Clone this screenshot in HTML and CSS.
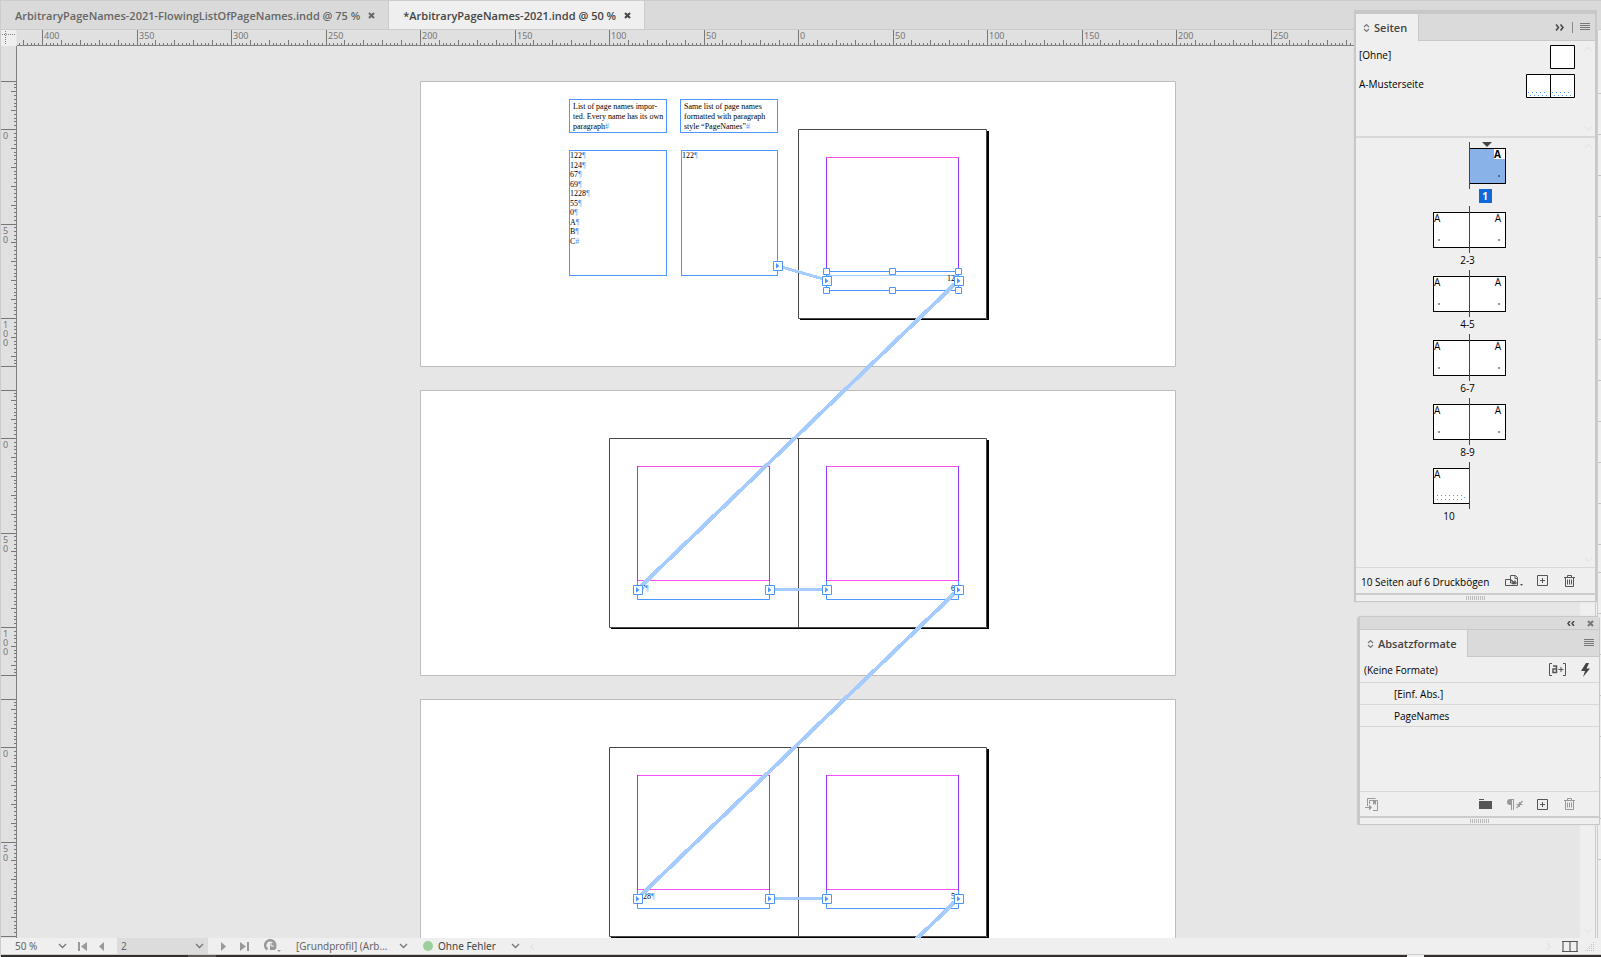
FILE: index.html
```html
<!DOCTYPE html>
<html lang="de">
<head>
<meta charset="utf-8">
<title>ArbitraryPageNames-2021.indd</title>
<link rel="stylesheet" href="styles.css">
</head>
<body>
<svg class="defs" aria-hidden="true">
  <symbol id="chevron" viewBox="0 0 9 6"><path d="M1 1l3.5 3.5L8 1" fill="none" stroke="currentColor" stroke-width="1.3"/></symbol>
  <symbol id="close" viewBox="0 0 7 7"><path d="M1 1l5 5M6 1l-5 5" stroke="currentColor" stroke-width="2"/></symbol>
  <symbol id="updown" viewBox="0 0 7 10"><path d="M1 4l2.500-2.500L6 4M1 6l2.500 2.500L6 6" fill="none" stroke="currentColor" stroke-width="1.2"/></symbol>
  <symbol id="menu" viewBox="0 0 10 8"><path d="M0 .5h10M0 2.500h10M0 4.500h10M0 6.500h10" stroke="currentColor"/></symbol>
  <symbol id="plus" viewBox="0 0 11 11"><path d="M.5.5h10v10H.5zM5.500 3v5M3 5.500h5" fill="none" stroke="currentColor"/></symbol>
  <symbol id="trash" viewBox="0 0 11 12"><path d="M0 2.500h11M3.500 2V.5h4V2M1.500 3v8.500h8V3M3.500 4.500v5M5.500 4.500v5M7.500 4.500v5" fill="none" stroke="currentColor"/></symbol>
  <symbol id="grip" viewBox="0 0 20 4"><path d="M.5 0v4M2.500 0v4M4.500 0v4M6.500 0v4M8.500 0v4M10.500 0v4M12.500 0v4M14.500 0v4M16.500 0v4M18.500 0v4" stroke="#bbb"/></symbol>
  <symbol id="port" viewBox="0 0 10 10"><path d="M.5.5h9v9h-9z" fill="#fff" stroke="#4c97ff"/><path d="M3 2v5.500L6.500 5z" fill="#4c97ff"/></symbol>
</svg>

<div class="app">
  <nav class="tabs">
    <div class="tab"><span>ArbitraryPageNames-2021-FlowingListOfPageNames.indd @ 75 %</span><button type="button" aria-label="Schließen"><svg width="7" height="7"><use href="#close"/></svg></button></div>
    <div class="tab active"><span>*ArbitraryPageNames-2021.indd @ 50 %</span><button type="button" aria-label="Schließen"><svg width="7" height="7"><use href="#close"/></svg></button></div>
  </nav>

  <div class="workspace">
    <svg class="corner" width="15" height="16"><path d="M1 4.500h14M4.500 1v14" stroke="#808080" stroke-dasharray="1 1"/></svg>
    <svg class="ruler-h" id="ruler-h"></svg>
    <svg class="ruler-v" id="ruler-v"></svg>
    <main class="canvas">
      <svg class="art">
        <g transform="translate(-17 -46)">
          <g id="boards" fill="#fff" stroke="#bdbdbd">
            <path d="M420.500 81.500h755v285h-755zM420.500 390.500h755v285h-755zM420.500 699.500h755v285h-755z"/>
          </g>
          <g>
            <path d="M987 131h2v189H800v-1h187z"/>
            <path d="M798.500 129.500h188v189h-188z" fill="#fff" stroke="#484848"/>
            <path d="M826.500 157v114M958.500 157v114" stroke="#9537ff"/>
            <path d="M826 157.500h133" stroke="#f74ff5"/>
            <path d="M826.500 271.500h132v19h-132z" fill="none" stroke="#4c97ff"/>
            <path d="M827 275.500h131" stroke="#a6cbff"/>
            <text x="947" y="281">12</text>
          </g>
          <g id="spread">
            <path d="M987 440h2v189H611v-1h376z"/>
            <path d="M609.500 438.500h377v189h-377zM798.500 438v189" fill="#fff" stroke="#484848"/>
            <path d="M637.500 580v19.500h132V580M826.500 580v19.500h132V580" fill="none" stroke="#4c97ff"/>
            <path d="M637.500 466v115M769.500 466v115M826.500 466v115M958.500 466v115" stroke="#9537ff"/>
            <path d="M638 466.500h131M638 580.500h131M827 466.500h131M827 580.500h131" stroke="#f74ff5"/>
          </g>
          <use href="#spread" y="309"/>
          <text x="641" y="591">7<tspan class="mark">¶</tspan></text>
          <text x="951" y="591">6</text>
          <text x="643" y="899">28<tspan class="mark">¶</tspan></text>
          <text x="951" y="899">5</text>
          <g stroke="#a6cbff" fill="none" shape-rendering="crispEdges">
            <path d="M778 266l49 14M770 589.500h57M770 898.500h57" stroke-width="3"/>
            <path d="M958 281L638 589M958 590L638 898M958 899L638 1207" stroke-width="4"/>
          </g>
          <g fill="#fff" stroke="#4c97ff">
            <path d="M823.500 268.500h6v6h-6zM889.500 268.500h6v6h-6zM955.500 268.500h6v6h-6zM823.500 287.500h6v6h-6zM889.500 287.500h6v6h-6zM955.500 287.500h6v6h-6z"/>
          </g>
          <g id="ports">
            <use href="#port" x="822" y="276" width="10" height="10"/>
            <use href="#port" x="954" y="276" width="10" height="10"/>
            <g id="spread-ports">
              <use href="#port" x="633" y="585" width="10" height="10"/>
              <use href="#port" x="765" y="585" width="10" height="10"/>
              <use href="#port" x="822" y="585" width="10" height="10"/>
              <use href="#port" x="954" y="585" width="10" height="10"/>
            </g>
            <use href="#spread-ports" y="309"/>
          </g>
        </g>
      </svg>
      <div class="frame note note-a">List of page names impor-<br>ted. Every name has its own<br>paragraph<i>#</i></div>
      <div class="frame note note-b">Same list of page names<br>formatted with paragraph<br>style “PageNames”<i>#</i></div>
      <div class="frame list list-a">
        <p>122<i>¶</i></p><p>124<i>¶</i></p><p>67<i>¶</i></p><p>69<i>¶</i></p><p>1228<i>¶</i></p><p>55<i>¶</i></p><p>0<i>¶</i></p><p>A<i>¶</i></p><p>B<i>¶</i></p><p>C<i>#</i></p>
      </div>
      <div class="frame list list-b"><p>122<i>¶</i></p></div>
      <svg class="port-over" width="10" height="10"><use href="#port"/></svg>
    </main>
    <div class="scrollbar"><svg width="9" height="6"><use href="#chevron"/></svg></div>
    <div class="dock"><i></i><i></i><i></i><i></i><i></i><i></i><i></i><i></i><i></i><i></i><i></i><i></i><i class="wide"></i><i></i><i></i><i></i><i></i><i></i><i></i><i></i></div>
  </div>

  <footer class="status">
    <label class="pick zoom"><select aria-label="Zoom"><option>50 %</option></select><svg width="9" height="6"><use href="#chevron"/></svg></label>
    <button type="button" class="first" aria-label="Erste Seite"><svg width="9" height="9"><path d="M0 0h2v9H0zM9 0v9L3 4.500z" fill="#999"/></svg></button>
    <button type="button" class="prev" aria-label="Vorherige Seite"><svg width="5" height="9"><path d="M5 0v9L0 4.500z" fill="#999"/></svg></button>
    <label class="pick page"><select aria-label="Seite"><option>2</option></select><svg width="9" height="6"><use href="#chevron"/></svg></label>
    <button type="button" class="next" aria-label="Nächste Seite"><svg width="5" height="9"><path d="M0 0v9l5-4.500z" fill="#999"/></svg></button>
    <button type="button" class="last" aria-label="Letzte Seite"><svg width="9" height="9"><path d="M7 0h2v9H7zM0 0v9l6-4.500z" fill="#999"/></svg></button>
    <button type="button" class="pre" aria-label="Preflight"><svg width="17" height="14"><path d="M3.500 10.500A5 5 0 1 1 11 7.500V10" fill="none" stroke="#999" stroke-width="2.600"/><path d="M6 4h3l2 2v5H6z" fill="#999"/><path d="M7 3v4h3" fill="none" stroke="#efefef"/><path d="M13 11h4l-2 2z" fill="#999"/></svg></button>
    <label class="pick profile"><select aria-label="Profil"><option>[Grundprofil] (Arb...</option></select><svg width="9" height="6"><use href="#chevron"/></svg></label>
    <span class="dot"></span>
    <label class="pick errors"><select aria-label="Fehler"><option>Ohne Fehler</option></select><svg width="9" height="6"><use href="#chevron"/></svg></label>
    <svg class="faint" width="5" height="9"><path d="M4 1L1 4.500 4 8" fill="none" stroke="#ddd"/></svg>
    <svg class="faint end" width="5" height="9"><path d="M1 1l3 3.500L1 8" fill="none" stroke="#ddd"/></svg>
    <button type="button" class="split" aria-label="Layoutansicht teilen"><svg width="16" height="11"><path d="M1 0v11M8 0v11M15 0v11" stroke="#999" stroke-width="2"/><path d="M0 .5h16M0 10.500h16" stroke="#555"/></svg></button>
    <svg class="resize" width="10" height="10"><path d="M0 9.500h10M2 7.500h8M4 5.500h6M6 3.500h4M8 1.500h2" stroke="#c4c4c4" stroke-dasharray="1 1"/></svg>
  </footer>
  <div class="taskbar"><i class="seg-a"></i><i class="seg-b"></i></div>
</div>

<section class="panel pages" aria-label="Seiten">
  <header class="bar">
    <h2><svg width="7" height="10"><use href="#updown"/></svg>Seiten</h2>
    <button type="button" aria-label="Einklappen"><svg width="9" height="7"><path d="M1 .5l2.500 3L1 6.500M5.500.5l2.500 3-2.500 3" fill="none" stroke="#444" stroke-width="1.500"/></svg></button>
    <span class="sep"></span>
    <button type="button" aria-label="Menü"><svg width="10" height="8"><use href="#menu"/></svg></button>
  </header>
  <div class="masters">
    <div class="master"><span>[Ohne]</span><svg width="25" height="24"><path d="M.5.5h24v23H.5z" fill="#fff" stroke="#000"/></svg></div>
    <div class="master"><span>A-Musterseite</span><svg width="49" height="24"><path d="M.5.5h48v23H.5zM24.500 0v24" fill="#fff" stroke="#000"/><path d="M2 18.500h20M4 21.500h18M26 18.500h20M28 21.500h18" stroke="#4c97ff" stroke-dasharray="1 3"/></svg></div>
    <svg class="scroll-up" width="9" height="6"><use href="#chevron"/></svg>
    <svg class="scroll-down" width="9" height="6"><use href="#chevron"/></svg>
  </div>
  <div class="thumbs">
    <svg class="scroll-up" width="9" height="6"><use href="#chevron"/></svg>
    <svg class="scroll-down" width="9" height="6"><use href="#chevron"/></svg>
    <figure class="right-only"><div class="sheets"><svg class="pointer" width="10" height="5"><path d="M0 0h10L5 5z" fill="#444"/></svg><span class="sheet current"><b>A</b><u></u></span></div><figcaption><mark>1</mark></figcaption></figure>
    <figure><div class="sheets"><span class="sheet">A<u></u></span><span class="sheet">A<u></u></span></div><figcaption>2-3</figcaption></figure>
    <figure><div class="sheets"><span class="sheet">A<u></u></span><span class="sheet">A<u></u></span></div><figcaption>4-5</figcaption></figure>
    <figure><div class="sheets"><span class="sheet">A<u></u></span><span class="sheet">A<u></u></span></div><figcaption>6-7</figcaption></figure>
    <figure><div class="sheets"><span class="sheet">A<u></u></span><span class="sheet">A<u></u></span></div><figcaption>8-9</figcaption></figure>
    <figure class="left-only"><div class="sheets"><span class="sheet">A<svg width="30" height="6"><path d="M0 .5h28M0 4.500h26M27 2.500h1" stroke="#4c97ff" stroke-dasharray="1 3"/></svg></span></div><figcaption>10</figcaption></figure>
  </div>
  <footer class="tools">
    <span>10 Seiten auf 6 Druckbögen</span>
    <button type="button" class="size" aria-label="Seitenformat bearbeiten"><svg width="18" height="12"><path d="M5.500 4.500h-5v6h12V7M5.500 8V.5h5l2 2V8zM10 1v2.500h2.500" fill="none" stroke="#555"/><path d="M6 5l4 3.500M10 5.500v3H7" stroke="#555" stroke-width="1.500" fill="none"/><path d="M15 9h3l-1.500 2z" fill="#555"/></svg></button>
    <button type="button" aria-label="Neue Seite"><svg width="11" height="11"><use href="#plus"/></svg></button>
    <button type="button" aria-label="Seite löschen"><svg width="11" height="12"><use href="#trash"/></svg></button>
  </footer>
  <div class="grip"><svg width="20" height="4"><use href="#grip"/></svg></div>
</section>

<section class="panel styles" aria-label="Absatzformate">
  <div class="titlebar">
    <button type="button" aria-label="Einklappen"><svg width="8" height="5"><path d="M3 0L1 2.500 3 5M7 0L5 2.500 7 5" fill="none" stroke="#444" stroke-width="1.500"/></svg></button>
    <button type="button" aria-label="Schließen"><svg width="7" height="7"><use href="#close"/></svg></button>
  </div>
  <header class="bar">
    <h2><svg width="7" height="10"><use href="#updown"/></svg>Absatzformate</h2>
    <button type="button" aria-label="Menü"><svg width="10" height="8"><use href="#menu"/></svg></button>
  </header>
  <div class="current-style"><span>(Keine Formate)</span>
    <button type="button" class="override" aria-label="Abweichungen hervorheben"><svg width="17" height="13" fill="none" stroke="#555"><path d="M3 .5H.5v12H3M14 .5h2.500v12H14"/><path d="M4 3h3.500v7M8 6H4v3.500H8" stroke-width="1.500"/><path d="M9.500 6.500h5M12 4v5"/></svg></button>
    <button type="button" aria-label="Schnell anwenden"><svg width="9" height="14"><path d="M5 0L0 8h4l-2 6 7-8.500H5.500L8 0z" fill="#444"/></svg></button>
  </div>
  <ul>
    <li>[Einf. Abs.]</li>
    <li>PageNames</li>
  </ul>
  <footer class="tools">
    <button type="button" class="load" aria-label="In Bibliothek"><svg width="13" height="13" fill="none" stroke="#999"><path d="M2.500 8V.5h8M4.500 6V2.500h8v10H8M0 9.500h5"/><path d="M4 6.500v6L7 9.500zM8 3h3v4L9.500 5.500 8 7z" fill="#999" stroke="none"/></svg></button>
    <button type="button" aria-label="Ordner"><svg width="13" height="11"><path d="M0 .5h5" stroke="#555"/><path d="M0 2h13v8H0z" fill="#555"/></svg></button>
    <button type="button" aria-label="Abweichungen löschen"><svg width="17" height="11"><path d="M4 0h4v11H7V1H6v10H5V6H4a3 3 0 0 1 0-6z" fill="#999"/><path d="M16.500 2l-6 7M10.500 5.500h6M13.500 3v5" stroke="#999" stroke-width="1.200"/></svg></button>
    <button type="button" aria-label="Neues Format"><svg width="11" height="11"><use href="#plus"/></svg></button>
    <button type="button" class="off" aria-label="Format löschen"><svg width="11" height="12"><use href="#trash"/></svg></button>
  </footer>
  <div class="grip"><svg width="20" height="4"><use href="#grip"/></svg></div>
</section>
<script src="rulers.js"></script>
</body>
</html>
```
FILE: styles.css
```css
* { box-sizing: border-box; }
body {
  margin: 0;
  height: 100vh;
  overflow: hidden;
  position: relative;
  background: #e6e6e6;
  color: #000;
  font: 10px/14px "Open Sans", "Noto Sans", sans-serif;
}
p, h2, ul, figure { margin: 0; padding: 0; }
button {
  display: flex;
  padding: 0;
  border: 0;
  background: none;
  color: #555;
}
svg { display: block; flex: none; }
.defs { position: absolute; width: 0; height: 0; }

.app { display: flex; flex-direction: column; height: 100%; border-left: 1px solid #ccc; }

/* Document tabs */
.tabs {
  display: flex;
  height: 30px;
  background: #dadada;
  border-top: 1px solid #ccc;
  border-bottom: 1px solid #ccc;
}
.tab {
  display: flex;
  align-items: center;
  gap: 8px;
  padding: 1px 13px 0 14px;
  border-right: 1px solid #ccc;
  color: #666;
  font: 600 11px/16px "Open Sans", sans-serif;
  white-space: nowrap;
}
.tab button { color: #666; }
.tab.active { background: #efefef; color: #444; }
.tab.active button { color: #444; }

/* Workspace */
.workspace {
  flex: 1;
  min-height: 0;
  display: grid;
  grid-template-columns: 16px minmax(0, 1fr) 18px 3px;
  grid-template-rows: 16px minmax(0, 1fr);
}
.corner { background: #efefef; }
.ruler-h, .ruler-v { width: 100%; height: 100%; background: #e0e0e0; font: 9px "Noto Sans", sans-serif; fill: #777; }
.ruler-h { border-bottom: 1px solid #808080; }
.ruler-v { border-right: 1px solid #808080; }
.canvas { position: relative; overflow: hidden; background: #e6e6e6; grid-column: 2; }
.scrollbar {
  grid-column: 3;
  grid-row: 1 / 3;
  display: flex;
  align-items: flex-end;
  padding: 0 3px 4px;
  background: #efefef;
  border-right: 1px solid #ccc;
  box-shadow: inset -1px 0 #efefef, inset -2px 0 #ccc;
  color: #e6e6e6;
}
.dock { grid-column: 4; grid-row: 1 / 3; background: #efefef; overflow: hidden; padding-top: 23px; }
.dock i { display: block; height: 41px; border-bottom: 1px solid #c4c4c4; }
.dock i.wide { height: 28px; }

/* Text threads on the pasteboard */
.art { width: 100%; height: 100%; font: 8px "Liberation Serif", serif; }
.mark, .frame i { fill: #4c97ff; color: #4c97ff; font-style: normal; }
.frame {
  position: absolute;
  border: 1px solid #4c97ff;
  font: 8px/10px "Liberation Serif", serif;
  color: #000;
  white-space: nowrap;
}
.note { top: 53px; width: 98px; height: 34px; padding: 2px 3px 0; }
.note-a, .list-a { left: 552px; }
.note-b { left: 663px; }
.list { top: 104px; height: 126px; display: flex; flex-direction: column; justify-content: space-between; padding-bottom: 29px; line-height: 9px; }
.list-a { width: 98px; }
.list-b { left: 664px; width: 97px; }
.port-over { position: absolute; left: 756px; top: 215px; }

/* Status bar */
.status {
  display: flex;
  align-items: center;
  height: 17px;
  padding-right: 2px;
  background: #efefef;
  border-bottom: 1px solid #ccc;
  color: #777;
}
.pick { display: flex; align-items: center; height: 16px; }
.pick select {
  flex: 1;
  min-width: 0;
  padding: 0;
  border: 0;
  background: none;
  appearance: none;
  color: #666;
  font: 10px/16px "Noto Sans", sans-serif;
}
.zoom { width: 52px; margin-left: 14px; }
.first { margin-left: 11px; }
.prev { margin-left: 12px; }
.page { width: 91px; margin-left: 13px; padding: 0 4px; background: #dcdcdc; }
.next { margin-left: 13px; }
.last { margin-left: 14px; }
.pre { margin-left: 15px; }
.profile { width: 112px; margin-left: 15px; }
.dot { width: 10px; height: 10px; margin: 0 5px 0 15px; border-radius: 50%; background: #9bcf9b; }
.errors { width: 82px; }
.errors select { color: #444; }
.faint { margin-left: 10px; }
.faint.end { margin-left: auto; }
.split { margin: 0 7px 0 11px; }
.resize { margin-right: 4px; }
.taskbar { display: flex; justify-content: space-between; height: 2px; background: #332e2b; padding: 0 177px 0 187px; }
.taskbar i { width: 28px; background: #5c5652; }
.taskbar .seg-b { width: 17px; background: #efefef; }

/* Floating panels */
.panel {
  position: absolute;
  background: #efefef;
  border: 1px solid #c8c8c8;
  box-shadow: -1px 0 1px #c8c8c8;
}
.panel.pages { top: 10px; right: 4px; width: 242px; border-width: 4px 2px 1px 1px; }
.panel.styles { top: 616px; right: 1px; width: 242px; border-width: 1px 1px 1px 2px; border-radius: 4px 4px 0 0; }
.bar { display: flex; align-items: center; height: 27px; background: #dadada; border-bottom: 1px solid #c8c8c8; padding-right: 5px; }
.bar h2 {
  display: flex;
  align-items: center;
  gap: 4px;
  height: 27px;
  padding: 1px 11px 0 7px;
  margin-right: auto;
  background: #efefef;
  border-right: 1px solid #c8c8c8;
  color: #444;
  font: 600 11px/16px "Open Sans", sans-serif;
}
.bar h2 svg, .bar button { color: #777; }
.sep { width: 1px; height: 11px; margin: 0 7px 0 8px; background: #888; }
.masters { position: relative; height: 97px; border-bottom: 2px solid #d8d8d8; padding: 4px 20px 0 3px; display: flex; flex-direction: column; gap: 5px; }
.master { display: flex; justify-content: space-between; height: 24px; line-height: 21px; }
.scroll-up, .scroll-down { position: absolute; right: 2px; top: 5px; color: #e6e6e6; }
.scroll-up { transform: rotate(180deg); }
.scroll-down { top: auto; bottom: 4px; }
.thumbs { position: relative; height: 430px; padding: 4px 0 0 77px; border-bottom: 1px solid #d8d8d8; }
figure { width: 73px; height: 64px; }
.sheets { position: relative; display: flex; height: 47px; padding: 6px 0 5px; }
.sheets::after { content: ""; position: absolute; left: 36px; top: 0; width: 1px; height: 47px; background: #444; }
.sheet { position: relative; width: 37px; height: 36px; background: #fff; border: 1px solid #000; line-height: 11px; }
.sheet + .sheet { width: 36px; border-left: 0; text-align: right; padding-right: 4px; }
.sheet u { position: absolute; left: 4px; bottom: 6px; width: 2px; height: 2px; background: #999; }
.sheet + .sheet u, .current u { left: auto; right: 5px; }
.current u { background: #567; }
.sheet svg { margin: 15px 0 0 3px; }
.right-only .sheets, .right-only figcaption { padding-left: 36px; }
.right-only figcaption { padding-right: 5px; }
.sheet.current { display: flex; justify-content: flex-end; background: #88b2e8; }
.current b { width: 11px; height: 10px; background: #fff; line-height: 11px; }
.pointer { position: absolute; left: 49px; top: 0; }
figcaption { text-align: center; padding-right: 4px; }
mark { display: block; width: 13px; height: 14px; margin: 0 auto; background: #1168d9; color: #fff; font-weight: bold; }
.left-only figcaption { padding-right: 41px; }
.tools { display: flex; align-items: center; gap: 16px; height: 25px; padding: 0 24px 0 5px; }
.pages .tools span { margin-right: auto; padding-top: 2px; white-space: nowrap; }
.pages .tools { padding-right: 29px; }
.size { margin-right: -2px; }
.grip { display: flex; justify-content: center; height: 8px; border-top: 2px solid #ccc; padding-top: 1px; }

.titlebar { display: flex; justify-content: flex-end; align-items: center; gap: 12px; height: 13px; padding: 1px 5px 0; background: #dadada; border-bottom: 1px solid #c8c8c8; }
.titlebar button { color: #777; }
.current-style { display: flex; align-items: center; gap: 15px; height: 26px; padding: 0 9px 0 4px; border-bottom: 1px solid #d8d8d8; }
.current-style span { margin-right: auto; padding-top: 1px; }
.styles ul { height: 109px; list-style: none; border-bottom: 1px solid #d8d8d8; }
.styles li { height: 22px; padding: 4px 0 0 34px; border-bottom: 1px solid #d8d8d8; }
.styles .tools { gap: 14px; height: 24px; }
.styles .tools button:last-child { padding-left: 2px; }
.load { margin-right: auto; }
.off { color: #999; }
```
FILE: rulers.js
```js
const NS = "http://www.w3.org/2000/svg";
const SCALE = 1.89; // pixels per millimetre at 50 %

function add(parent, name, attrs, text) {
  const el = document.createElementNS(NS, name);
  for (const key in attrs) el.setAttribute(key, attrs[key]);
  if (text) el.textContent = text;
  parent.append(el);
}

const h = document.getElementById("ruler-h");
for (let mm = -412; mm <= 420; mm += 2) {
  const x = 781 + Math.round(mm * SCALE);
  const size = mm % 50 === 0 ? 15 : mm % 10 === 0 ? 5 : 2;
  add(h, "rect", { x, y: 15 - size, width: 1, height: size });
  if (size === 15) add(h, "text", { x: x + 2, y: 9 }, String(Math.abs(mm)));
}

const v = document.getElementById("ruler-v");
const visible = v.getBoundingClientRect().height;
for (const zero of [83, 392, 701]) {
  for (const edge of [-48, 237]) add(v, "rect", { x: 0, y: zero + edge, width: 15, height: 1 });
  for (let mm = -24; mm <= 124; mm += 2) {
    const y = zero + Math.round(mm * SCALE);
    const size = mm % 50 === 0 ? 15 : mm % 10 === 0 ? 5 : 2;
    add(v, "rect", { x: 15 - size, y, width: size, height: 1 });
    if (size === 15 && y + 12 < visible) {
      String(mm).split("").forEach((digit, i) => add(v, "text", { x: 2, y: y + 10 + i * 9 }, digit));
    }
  }
}
```
